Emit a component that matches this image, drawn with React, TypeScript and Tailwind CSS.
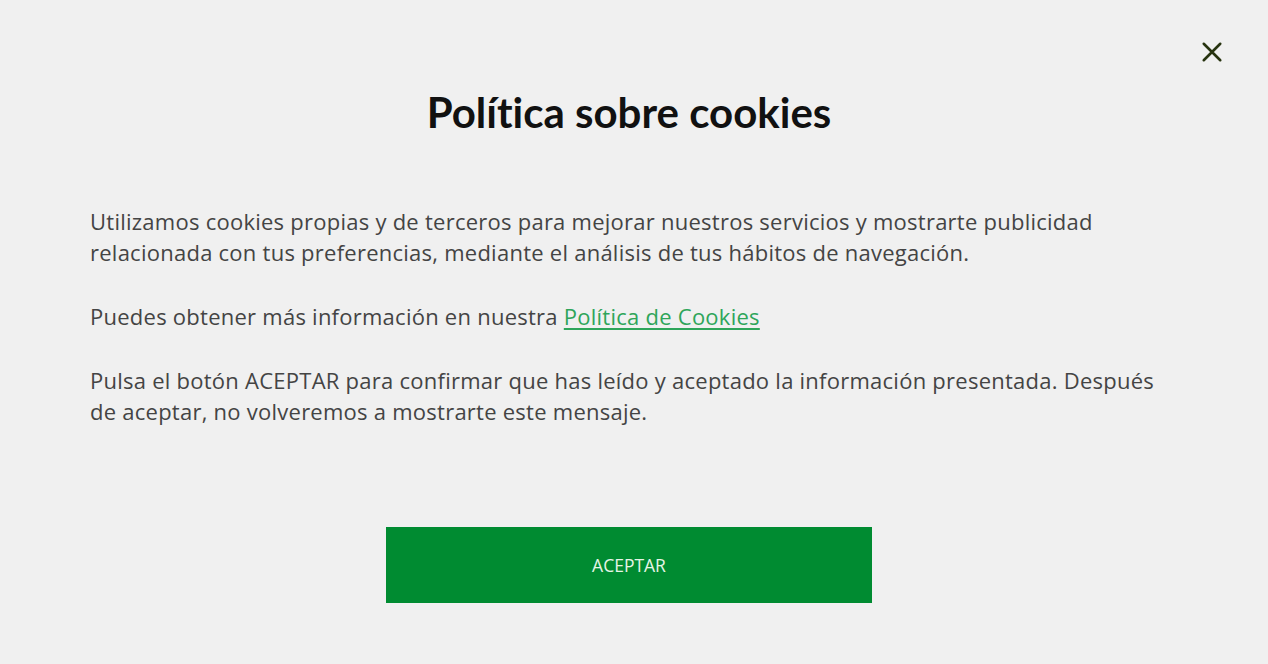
export default function App() {
  return (
    <div className="relative min-h-[664px] w-full bg-[#f0f0f0] px-[90px]" style={{ fontFamily: '"Open Sans", sans-serif' }}>
      <button className="absolute right-[45px] top-[41px] h-[22px] w-[22px] text-[#27330f]" aria-label="Cerrar">
        <svg viewBox="0 0 24 24" className="h-full w-full" fill="none" stroke="currentColor" strokeWidth={2.8} strokeLinecap="round">
          <path d="M3 3l18 18M21 3L3 21" />
        </svg>
      </button>

      <h1 className="pt-[86px] pr-[10px] text-center text-[42px] font-bold leading-[52px] text-[#111] [font-variant-ligatures:none]" style={{ fontFamily: 'Lato, sans-serif' }}>
        Política sobre cookies
      </h1>

      <div className="mt-[68px] space-y-[33px] text-[22px] leading-[31px] tracking-[0.25px] text-[#444]">
        <p>
          Utilizamos cookies propias y de terceros para mejorar nuestros servicios y mostrarte publicidad relacionada con tus preferencias, mediante el análisis de tus hábitos de navegación.
        </p>
        <p>
          Puedes obtener más información en nuestra{" "}
          <a href="#" className="text-[#2ea55a] underline underline-offset-[3px]">Política de Cookies</a>
        </p>
        <p>
          Pulsa el botón ACEPTAR para confirmar que has leído y aceptado la información presentada. Después de aceptar, no volveremos a mostrarte este mensaje.
        </p>
      </div>

      <div className="mt-[100px] flex justify-center pr-[10px]">
        <button className="flex h-[76px] w-[486px] items-center justify-center bg-[#008b31] text-[17.5px] text-[#e6f5e6]">
          ACEPTAR
        </button>
      </div>
    </div>
  );
}
